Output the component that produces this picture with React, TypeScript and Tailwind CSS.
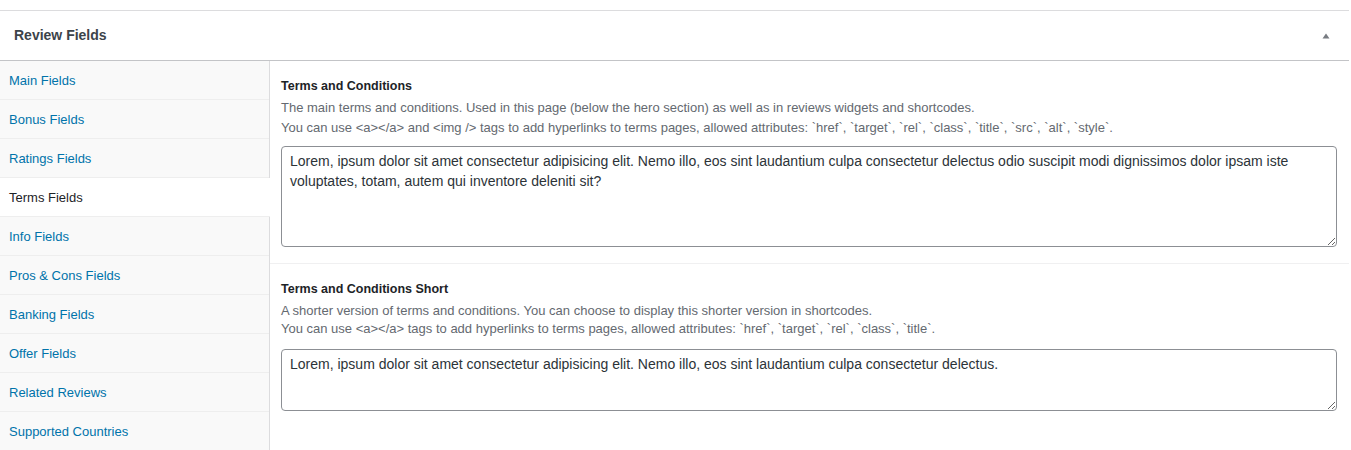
import { useState } from "react";

const tabs = [
  "Main Fields",
  "Bonus Fields",
  "Ratings Fields",
  "Terms Fields",
  "Info Fields",
  "Pros & Cons Fields",
  "Banking Fields",
  "Offer Fields",
  "Related Reviews",
  "Supported Countries",
];

const font = { fontFamily: '"Liberation Sans", Arial, sans-serif' };

export default function App() {
  const [active, setActive] = useState("Terms Fields");

  return (
    <div className="bg-white w-[1351px] h-[450px] overflow-hidden pt-[10px]" style={font}>
      <div className="w-[1349px] border-t border-[#dcdcde] bg-white">
        <div className="h-[50px] flex items-center justify-between pl-[14px] pr-[19px] border-b border-[#c3c4c7]">
          <h2 className="text-[14px] font-bold text-[#3c434a]">Review Fields</h2>
          <svg width="8" height="6" viewBox="0 0 8 6" className="mt-[1px]">
            <path d="M4 0.5 L7.5 5.5 L0.5 5.5 Z" fill="#787c82" />
          </svg>
        </div>

        <div className="flex">
          <ul className="w-[270px] shrink-0 bg-[#f9f9f9] border-r border-[#dcdcde] min-h-[400px]">
            {tabs.map((t) => (
              <li
                key={t}
                onClick={() => setActive(t)}
                className={
                  "h-[39px] flex items-center pl-[9px] pt-[2px] text-[13px] border-b border-[#eeeeee] cursor-pointer " +
                  (t === active ? "bg-white text-[#1d2327] mr-[-1px]" : "text-[#0073aa]")
                }
              >
                {t}
              </li>
            ))}
          </ul>

          <div className="flex-1 min-w-0">
            <section className="pl-[11px] pr-[12px] pt-[17px] pb-[16px] border-b border-[#f0f0f1]">
              <h3 className="text-[12.5px] font-bold text-[#1d2327] leading-[16px]">Terms and Conditions</h3>
              <div className="text-[13px] text-[#646970] mt-[4px]">
                <p className="leading-[20px]">
                  The main terms and conditions. Used in this page (below the hero section) as well as in reviews widgets and shortcodes.
                </p>
                <p className="leading-[20px]">
                  You can use &lt;a&gt;&lt;/a&gt; and &lt;img /&gt; tags to add hyperlinks to terms pages, allowed attributes: `href`, `target`, `rel`, `class`, `title`, `src`, `alt`, `style`.
                </p>
              </div>
              <textarea
                className="block w-full h-[101px] mt-[8px] border border-[#8c8f94] rounded-[4px] px-[8px] py-[4px] text-[14px] leading-[20px] text-[#2c3338] outline-none"
                style={font}
                defaultValue="Lorem, ipsum dolor sit amet consectetur adipisicing elit. Nemo illo, eos sint laudantium culpa consectetur delectus odio suscipit modi dignissimos dolor ipsam iste voluptates, totam, autem qui inventore deleniti sit?"
              />
            </section>

            <section className="pl-[11px] pr-[12px] pt-[17px] pb-[16px]">
              <h3 className="text-[12.5px] font-bold text-[#1d2327] leading-[16px]">Terms and Conditions Short</h3>
              <div className="text-[13px] text-[#646970] mt-[5px]">
                <p className="leading-[18px]">
                  A shorter version of terms and conditions. You can choose to display this shorter version in shortcodes.
                </p>
                <p className="leading-[18px]">
                  You can use &lt;a&gt;&lt;/a&gt; tags to add hyperlinks to terms pages, allowed attributes: `href`, `target`, `rel`, `class`, `title`.
                </p>
              </div>
              <textarea
                className="block w-full h-[62px] mt-[11px] border border-[#8c8f94] rounded-[4px] px-[8px] py-[4px] text-[14px] leading-[20px] text-[#2c3338] outline-none"
                style={font}
                defaultValue="Lorem, ipsum dolor sit amet consectetur adipisicing elit. Nemo illo, eos sint laudantium culpa consectetur delectus."
              />
            </section>
          </div>
        </div>
      </div>
    </div>
  );
}
